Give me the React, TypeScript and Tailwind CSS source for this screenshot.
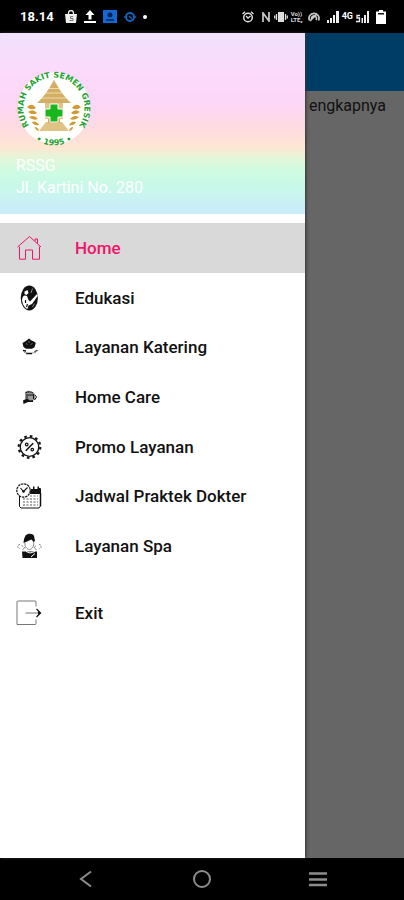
import type { ReactNode } from "react";

type MenuItem = {
  label: string;
  icon: ReactNode;
  active?: boolean;
};

function Icon({ children }: { children: ReactNode }) {
  return (
    <svg viewBox="0 0 26 26" className="h-[26px] w-[26px] shrink-0" fill="none" stroke="currentColor" aria-hidden="true">
      {children}
    </svg>
  );
}

const homeIcon = (
  <Icon>
    <path d="M1.5 12 13.5 1.5 25 12M3.5 11.5v12.7h6V15h7v9.2h7V11.5M19 6V4h2.500v4.500" strokeWidth="1" />
  </Icon>
);

const educationIcon = (
  <Icon>
    <ellipse cx="13.300" cy="13" rx="8.600" ry="12.400" fill="currentColor" stroke="none" />
    <path d="M6 14.500c.5-2.500 1.500-4 3-4l2 .5 1.500 4 1.500 1.500 7-7.500 .7 2-5.700 8-3.500 1.500-1 3.500c-3-1.500-5-4-5.500-9.500z" fill="#fff" stroke="none" />
    <path d="M8.500 6.500l3-1.500 1 3-2 2-2-1z" fill="#fff" stroke="none" />
    <path d="M9.500 15v3M11.500 19l-1 3" strokeWidth="1.200" />
    <path d="M15 8l1.500-4.500M16.500 22l2-3.500" stroke="#aaa" strokeWidth=".8" />
  </Icon>
);

const cateringIcon = (
  <Icon>
    <path d="M7.500 13 6.500 9 9 7.500l1.500-1L13 4.500l2.500 2L18 7.500l1.800 1.500-1.300 4.300-2.500 1.500h-6z" fill="currentColor" stroke="none" />
    <path d="M10 9.500l1.500 1M14.500 10.500l2-1M13 7v2" stroke="#777" strokeWidth=".8" />
    <path d="M7 16.500l3 .5M18.500 17.500l3-1M10 19.500h6" strokeWidth="1.300" />
    <path d="M8 18.500l3 .5M16 19l4-.5" stroke="#999" strokeWidth="1" />
  </Icon>
);

const homeCareIcon = (
  <Icon>
    <path d="M9 8l2.500-1.500L17 8l2 2v5.500l-3 1.500-5-.5-2-1.500z" fill="#999" stroke="none" />
    <path d="M9.500 9c2-1.500 6-1.500 7.500 0M11 10v4.500M17.500 10v5M12 11h5M19 11l1.500 2-2 3" strokeWidth="1" />
    <path d="M7 16.500l4-2 3 2 3-.5v2h-5L7.500 20z" fill="currentColor" stroke="none" />
  </Icon>
);

const promoIcon = (
  <Icon>
    <circle cx="13.500" cy="13" r="9.300" strokeWidth="1.300" />
    <circle cx="13.500" cy="13" r="10.800" strokeWidth="2.200" strokeDasharray="2.600 3.055" />
    <path d="M9.800 16.800l7.400-7.600" strokeWidth="1.500" />
    <circle cx="10.700" cy="10.500" r="1.300" strokeWidth="1.200" />
    <circle cx="16.300" cy="15.600" r="1.300" strokeWidth="1.200" />
  </Icon>
);

const scheduleIcon = (
  <Icon>
    <path d="M3.500 13v10.500l1.500 1.500h18l1.500-2V5.500h-2.500" strokeWidth="1" />
    <path d="M14.500 6h10.500v5H14zM17 3.500h1.500V7H17zM21.500 3.500H23V7h-1.500z" fill="currentColor" stroke="none" />
    <path d="M24.500 10v13" strokeWidth="1.500" />
    <circle cx="7.500" cy="7.500" r="6.700" fill="#fff" strokeWidth="1.200" strokeDasharray="2.500 .7" />
    <path d="M4.500 5l3 3.500L11.500 4.500" strokeWidth="1.100" />
    <circle cx="7.500" cy="8.500" r="1.300" fill="currentColor" stroke="none" />
    <path d="M7 16h15M7 19h15M7 22h15" stroke="#555" strokeWidth="1.100" strokeDasharray="2 1.500" />
    <path d="M14 13h8" stroke="#777" strokeWidth="1" strokeDasharray="2 1.500" />
  </Icon>
);

const spaIcon = (
  <Icon>
    <path d="M9.500 2.500C12 0 17 .5 18 3l1 5-1.500 1-2-2.500L11 8.500 7.500 10 8 6z" fill="currentColor" stroke="none" />
    <path d="M9 9.500c-.5 4 1.500 6.500 4.500 7 3-.5 4.500-3 4.200-7.500M9 14l-2.500 3M18 14l2.500 3" stroke="#777" strokeWidth=".9" />
    <path d="M6 18.500h15v6.500H6.500z" fill="currentColor" stroke="none" />
    <path d="M10 18.500l4 1.500 5-1.500M15 24l4-3.500" stroke="#fff" strokeWidth="1" />
    <path d="M4 11.500c-3 0-3 4 0 4M23 11.500c3 0 3 4 0 4M5.500 12.500l3 2M20 12.500l-2 2" stroke="#777" strokeWidth=".9" strokeDasharray="2 1" />
  </Icon>
);

const exitIcon = (
  <Icon>
    <path d="M20 6.500V1.500L19 1H1.500L1 1.500v23h18.500l.5-1v-4M9.500 13H23" stroke="#777" strokeWidth="1" />
    <path d="M20.500 9l4 4-4 4" strokeWidth="1.200" />
    <path d="M22 11l3 2-3 2z" fill="currentColor" stroke="none" />
  </Icon>
);

const menu: MenuItem[] = [
  { label: "Home", icon: homeIcon, active: true },
  { label: "Edukasi", icon: educationIcon },
  { label: "Layanan Katering", icon: cateringIcon },
  { label: "Home Care", icon: homeCareIcon },
  { label: "Promo Layanan", icon: promoIcon },
  { label: "Jadwal Praktek Dokter", icon: scheduleIcon },
  { label: "Layanan Spa", icon: spaIcon },
];

function MenuLink({ label, icon, active }: MenuItem) {
  return (
    <a
      href="#"
      aria-current={active ? "page" : undefined}
      className={
        active
          ? "flex items-center gap-[33px] bg-[#d9d9d9] px-4 text-[#f0146a]"
          : "flex items-center gap-[33px] px-4 text-[#111111]"
      }
    >
      {icon}
      <span>{label}</span>
    </a>
  );
}

function Logo() {
  return (
    <svg viewBox="-38 -38 76 76" className="h-[76px] w-[76px]" role="img" aria-label="Rumah Sakit Semen Gresik">
      <defs>
        <path id="ring-top" d="M-17.200 25.200A30.500 30.500 0 1 1 17.200 25.200" />
        <path id="ring-bottom" d="M-25 27.500A37 37 0 0 0 25 27.500" />
      </defs>
      <circle r="36" fill="#fff" />
      <g fill="#1fa32e" className="font-['DejaVu_Sans'] text-[8px] font-bold">
        <text textAnchor="middle">
          <textPath href="#ring-top" startOffset="50%">RUMAH SAKIT SEMEN GRESIK</textPath>
        </text>
        <text textAnchor="middle">
          <textPath href="#ring-bottom" startOffset="50%">• 1995 •</textPath>
        </text>
      </g>
      <path d="M0-28 5-19.500 8-15 12-10 17-5H-17L-12-10-8-15-5-19.500z" fill="#d4ae64" />
      <path d="M-5-19.500H5M-8-15H8M-12-10H12" stroke="#f0dbab" strokeWidth="1" />
      <path d="M-9-5H9V11H-9zM-8 14H8L15 23H-15z" fill="#dfc485" />
      <path d="M-6 11H6V15H-6z" fill="#d4ae64" />
      <path d="M-4-4H4V1H9V9H4V14H-4V9H-9V1H-4z" fill="#19b61f" stroke="#fff" strokeWidth="1" />
      <g id="wheat" fill="#d29a32">
        <path d="M-27-1q5-5 9 1-5 3-9-1zM-26 4q5-4 9 1-4 3-9-1zM-25 9q5-3 9 2-5 2-9-2zM-22 14q4-2 7 3-5 1-7-3zM-19 19q3 0 4 4-4-1-4-4z" />
      </g>
      <use href="#wheat" transform="scale(-1 1)" />
    </svg>
  );
}

function StatusBar() {
  return (
    <header className="flex h-[33px] items-center justify-between bg-black pr-[18px] pl-5 text-white">
      <div className="flex items-center gap-[7px]">
        <time className="mr-1 text-[13px] font-bold">18.14</time>
        <svg viewBox="0 0 12 13" className="h-[13px] w-3" aria-hidden="true">
          <path d="M0 4h12l-1 9H1z" fill="#eee" />
          <path d="M3.500 5V3a2.500 2.500 0 0 1 5 0v2" fill="none" stroke="#eee" strokeWidth="1.300" />
          <path d="M8 6.500H5.500v2H8v2H4.500" fill="none" stroke="#777" />
        </svg>
        <svg viewBox="0 0 12 13" className="h-[13px] w-3" fill="#fff" aria-hidden="true">
          <path d="M6 0l4.500 5h-3v4.500h-3V5h-3zM0 11h12v2H0z" />
        </svg>
        <svg viewBox="0 0 14 13" className="h-[13px] w-3.5" aria-hidden="true">
          <path d="M0 0h14v13H0z" fill="#1269d3" />
          <circle cx="7" cy="5" r="2.500" fill="#06244f" />
          <path d="M3 10h8" stroke="#06244f" strokeWidth="1.500" />
        </svg>
        <svg viewBox="0 0 12 12" className="h-3 w-3" fill="none" stroke="#0d66bd" aria-hidden="true">
          <circle cx="6" cy="6" r="4" strokeWidth="2" />
          <path d="M0 6h2M10 6h2M5 5l3 3" strokeWidth="1.300" />
        </svg>
        <span className="h-1 w-1 rounded-full bg-white" />
      </div>
      <div className="flex items-center gap-[3px]">
        <svg viewBox="0 0 12 12" className="mr-1 h-3 w-3 shrink-0" fill="none" stroke="#ddd" aria-hidden="true">
          <circle cx="6" cy="6.500" r="4.300" strokeWidth="1.500" />
          <path d="M.5 3 3 .8M11.500 3 9 .8M4 5l2 2 2.500-2" strokeWidth="1.400" />
        </svg>
        <svg viewBox="0 0 10 10" className="h-2.5 w-2.5 shrink-0" fill="none" stroke="#ccc" strokeWidth="1.700" aria-hidden="true">
          <path d="M2 10V1l6 8V0" />
        </svg>
        <svg viewBox="0 0 14 12" className="h-3 w-3.5 shrink-0" aria-hidden="true">
          <path d="M4 1h6v10H4z" fill="#ddd" />
          <path d="M2.500 3v6M11.500 3v6M.7 4.500v3M13.300 4.500v3" stroke="#ddd" strokeWidth="1.300" />
        </svg>
        <span className="flex w-3.5 shrink-0 flex-col text-[6px] leading-[6px] font-bold text-[#ddd]">
          <span>Vo))</span>
          <span>LTE₂</span>
        </span>
        <svg viewBox="0 0 12 12" className="mr-1 h-3 w-3 shrink-0" fill="none" stroke="#ccc" aria-hidden="true">
          <path d="M1.500 9.500A5 5 0 1 1 10.500 9.500" strokeWidth="1.700" />
          <path d="M4 9a2.500 2.500 0 1 1 4 0M2 10l7-7" strokeWidth="1.500" />
        </svg>
        <svg viewBox="0 0 12 12" className="h-3 w-3 shrink-0" fill="#eee" aria-hidden="true">
          <path d="M0 9h2v3H0zM3 7h2v5H3zM6 4h2v8H6zM9 0h3v12H9z" />
        </svg>
        <span className="text-[9px] font-bold">4G</span>
        <svg viewBox="0 0 13 12" className="mr-1 h-3 w-[13px] shrink-0" fill="#eee" aria-hidden="true">
          <path d="M4 4.500H1v2.500h2.500v3.500H0" fill="none" stroke="#eee" strokeWidth="1.300" />
          <path d="M5.500 7h1.500v5H5.500zM8 4h2v8H8zM11 0h2v12h-2z" />
        </svg>
        <svg viewBox="0 0 10 14" className="h-3.5 w-2.5 shrink-0" fill="#fff" aria-hidden="true">
          <path d="M3 0h4v1.500h3V14H0V1.500h3z" />
          <path d="M2 3h6v1.500H2z" fill="#111" />
        </svg>
      </div>
    </header>
  );
}

function Drawer() {
  return (
    <aside className="absolute inset-y-0 left-0 w-[305px] bg-white shadow-[1px_0_3px_#333333]">
      <div className="flex h-[181px] flex-col bg-[linear-gradient(#f0e1fb_0%,#fcdafc_22%,#fcd6f6_40%,#fedbe0_53%,#fee6d3_63%,#e4f5d8_69%,#cefbe0_76%,#c8f8e9_85%,#caedfa_97%)] px-4 pt-[37px] text-base text-white">
        <Logo />
        <p className="mt-[9px] leading-[22px]">RSSG</p>
        <p className="leading-[22px]">Jl. Kartini No. 280</p>
      </div>
      <nav className="pt-[9px] text-[17px] leading-[26px] font-medium">
        <div className="grid h-[348px] auto-rows-fr">
          {menu.map((item) => (
            <MenuLink key={item.label} {...item} />
          ))}
        </div>
        <div className="mt-[17px] grid h-[49px]">
          <MenuLink label="Exit" icon={exitIcon} />
        </div>
      </nav>
    </aside>
  );
}

function NavigationBar() {
  return (
    <footer className="flex h-[42px] items-center bg-black px-7 text-[#8c8c8c]">
      <button type="button" aria-label="Kembali" className="flex flex-1 justify-center">
        <svg viewBox="0 0 18 18" className="h-[18px] w-[18px]" fill="none" stroke="currentColor" strokeWidth="2">
          <path d="M14 1.500 4 9l10 7.500" />
        </svg>
      </button>
      <button type="button" aria-label="Beranda" className="flex flex-1 justify-center">
        <svg viewBox="0 0 18 18" className="h-[18px] w-[18px]" fill="none" stroke="currentColor" strokeWidth="2">
          <circle cx="9" cy="9" r="8" />
        </svg>
      </button>
      <button type="button" aria-label="Aplikasi terbaru" className="flex flex-1 justify-center">
        <svg viewBox="0 0 18 18" className="h-[18px] w-[18px]" fill="none" stroke="currentColor" strokeWidth="2.500">
          <path d="M0 3.500h18M0 9.500h18M0 15h18" />
        </svg>
      </button>
    </footer>
  );
}

export default function App() {
  return (
    <div className="flex min-h-screen flex-col bg-black font-['Roboto',sans-serif]">
      <StatusBar />
      <main className="relative flex-1 bg-[#666666]">
        <div className="h-[58px] bg-[#003d66]" />
        <p className="pt-[3px] pr-[18px] text-right text-base leading-6 text-[#111111]">engkapnya</p>
        <Drawer />
      </main>
      <NavigationBar />
    </div>
  );
}
